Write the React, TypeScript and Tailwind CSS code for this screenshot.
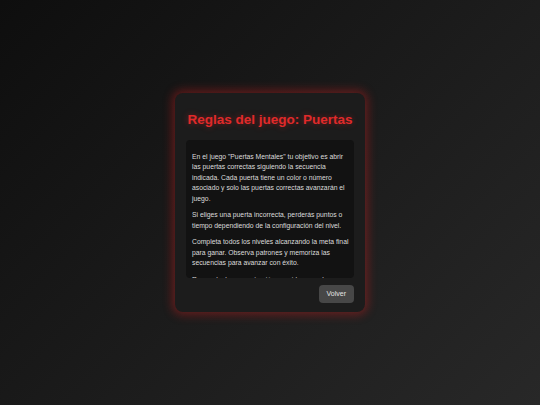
const paragraphs = [
  'En el juego "Puertas Mentales" tu objetivo es abrir las puertas correctas siguiendo la secuencia indicada. Cada puerta tiene un color o número asociado y solo las puertas correctas avanzarán el juego.',
  "Si eliges una puerta incorrecta, perderás puntos o tiempo dependiendo de la configuración del nivel.",
  "Completa todos los niveles alcanzando la meta final para ganar. Observa patrones y memoriza las secuencias para avanzar con éxito.",
  "Recuerda: la concentración y rapidez son clave para superar cada nivel.",
];

const App = () => {
  return (
    <div className="flex h-[405px] w-full items-center justify-center bg-[linear-gradient(135deg,#0e0e0e_0%,#1b1b1b_50%,#282828_100%)] font-['Liberation_Sans',Arial,sans-serif]">
      <div className="flex w-[190px] flex-col rounded-lg bg-[#1c1c1c] px-[11px] pt-[19px] pb-[9px] shadow-[0_0_10px_3px_rgba(200,30,30,0.42)]">
        <h2 className="text-center text-[13.5px] leading-[15.5px] font-bold text-[#e02a2a] [text-shadow:0_0_6px_rgba(220,38,38,0.45)]">
          Reglas del juego: Puertas
        </h2>

        <div className="mt-[12px] h-[138px] overflow-hidden rounded-[4px] bg-[#121212] pt-[6px] pr-[4px] pl-[6px]">
          {paragraphs.map((text, i) => (
            <p
              key={i}
              className="my-[6px] text-[6.8px] leading-[10.5px] text-[#dcdcdc]"
            >
              {text}
            </p>
          ))}
        </div>

        <div className="mt-[7px] flex justify-end">
          <button className="rounded-[4px] bg-[#474747] px-[8px] py-[5px] text-[7px] leading-[8px] text-[#e5e5e5]">
            Volver
          </button>
        </div>
      </div>
    </div>
  );
};

export default App;
